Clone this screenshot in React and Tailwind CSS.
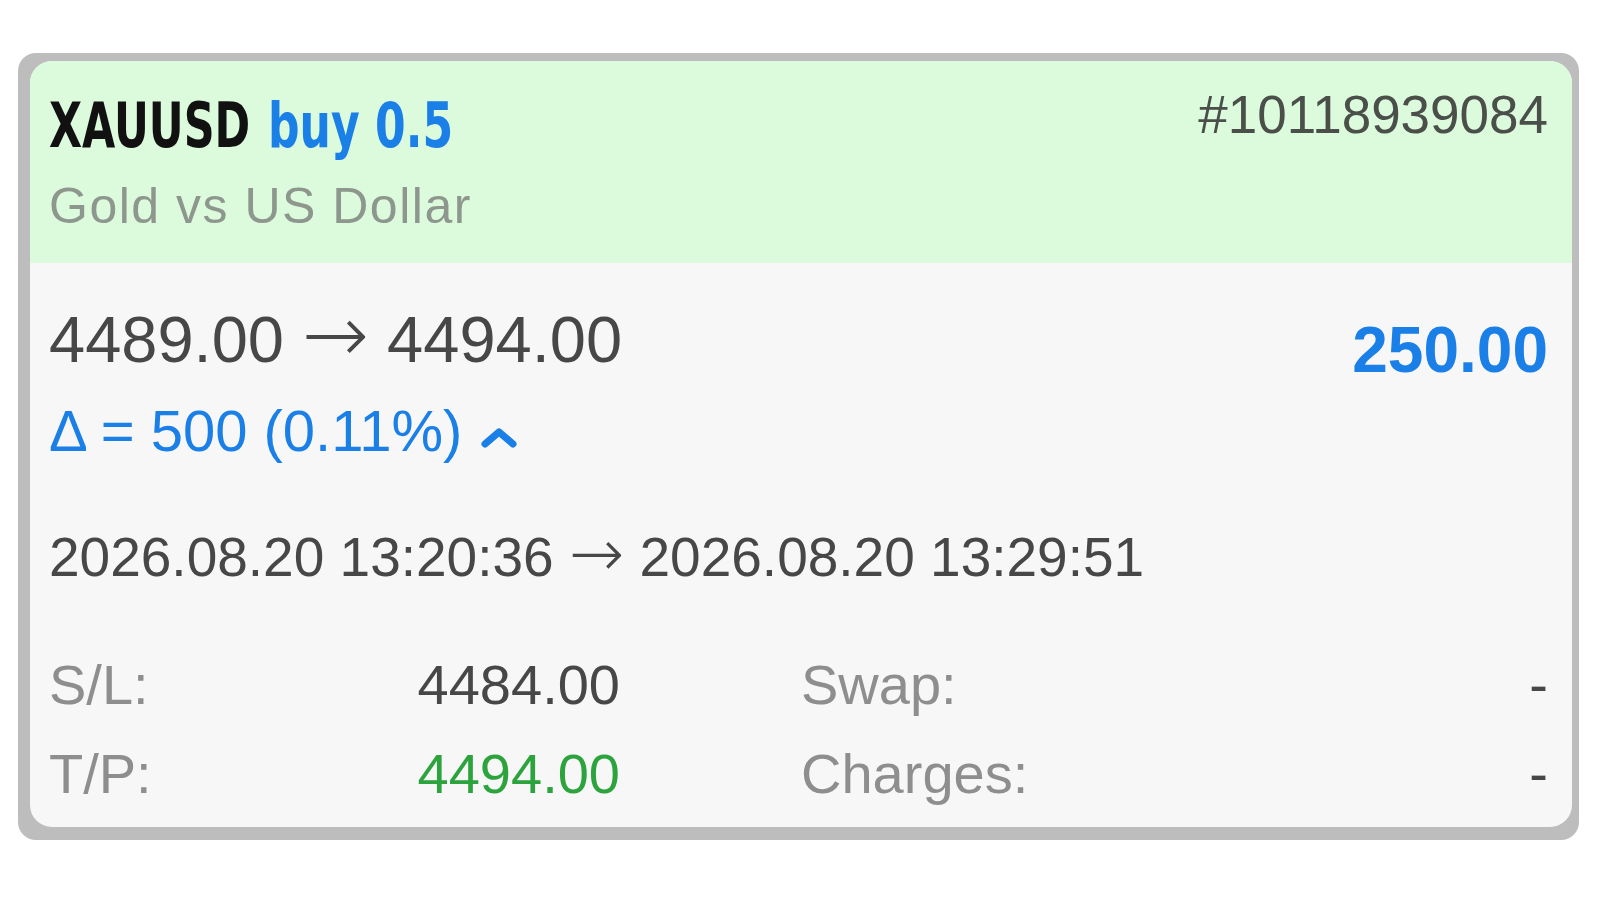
export default function App() {
  return (
    <div className="min-h-screen bg-white pt-[53px] pl-[18px] font-['Liberation_Sans',Arial,sans-serif]">

      {/* Card frame */}
      <div className="w-[1561px] h-[787px] bg-[#bdbdbd] rounded-[18px] pt-[8px] pl-[12px] pr-[7px] pb-[13px]">

        <div className="h-full rounded-[22px] overflow-hidden bg-[#f7f7f7] flex flex-col">

          {/* Header */}
          <div className="h-[202px] shrink-0 bg-[#dcfadc] flex justify-between items-start pl-[19px] pr-[24px] pt-[27px]">
            <div className="mt-[7px]">
              <div className="flex text-[62px] leading-none font-bold font-['DejaVu_Sans_Condensed','DejaVu_Sans',sans-serif] whitespace-nowrap">
                <span className="w-[201px] text-[#111111]">
                  <span className="inline-block origin-left scale-x-[0.77]">XAUUSD</span>
                </span>
                <span className="ml-[18px] w-[182px] text-[#1a7fe6]">
                  <span className="inline-block origin-left scale-x-[0.79]">buy 0.5</span>
                </span>
              </div>
              <div className="mt-[24px] text-[50px] leading-none tracking-[1.5px] text-[#8e978e] whitespace-nowrap">
                Gold vs US Dollar
              </div>
            </div>
            <div className="text-[53px] leading-none text-[#4a4f4a] whitespace-nowrap">
              #10118939084
            </div>
          </div>

          {/* Body */}
          <div className="flex-1 pt-[44px] pl-[19px] pr-[24px] text-[#474747]">

            <div className="flex justify-between items-start">
              <div>
                <div className="text-[65px] leading-none whitespace-nowrap">
                  4489.00 <span className="text-[80px] leading-[0] font-['DejaVu_Sans',sans-serif] font-light">→</span> 4494.00
                </div>
                <div className="mt-[30px] flex items-start text-[#1a7fe6]">
                  <span className="text-[58px] leading-none whitespace-nowrap">
                    Δ = 500 (0.11%)
                  </span>
                  <svg width="36" height="20" viewBox="0 0 36 20" className="ml-[19px] mt-[26px]">
                    <polyline
                      points="4,16 18,4 32,16"
                      fill="none"
                      stroke="#1a7fe6"
                      strokeWidth="7"
                      strokeLinecap="round"
                      strokeLinejoin="round"
                    />
                  </svg>
                </div>
              </div>
              <div className="mt-[11px] text-[64px] leading-none font-bold text-[#1a7fe6]">
                250.00
              </div>
            </div>

            {/* Open / close time */}
            <div className="mt-[70px] text-[55px] leading-none whitespace-nowrap">
              2026.08.20 13:20:36 <span className="text-[66px] leading-[0] font-['DejaVu_Sans',sans-serif] font-light">→</span> 2026.08.20 13:29:51
            </div>

            {/* S/L, T/P, swap, charges */}
            <div className="mt-[72px] flex text-[56px] leading-none">
              <div className="w-[571px] flex justify-between">
                <span className="text-[#8e8e8e]">S/L:</span>
                <span>4484.00</span>
              </div>
              <div className="ml-[181px] flex-1 flex justify-between">
                <span className="text-[#8e8e8e]">Swap:</span>
                <span>-</span>
              </div>
            </div>

            <div className="mt-[33px] flex text-[56px] leading-none">
              <div className="w-[571px] flex justify-between">
                <span className="text-[#8e8e8e]">T/P:</span>
                <span className="text-[#2ca33c]">4494.00</span>
              </div>
              <div className="ml-[181px] flex-1 flex justify-between">
                <span className="text-[#8e8e8e]">Charges:</span>
                <span>-</span>
              </div>
            </div>

          </div>

        </div>

      </div>

    </div>
  )
}
